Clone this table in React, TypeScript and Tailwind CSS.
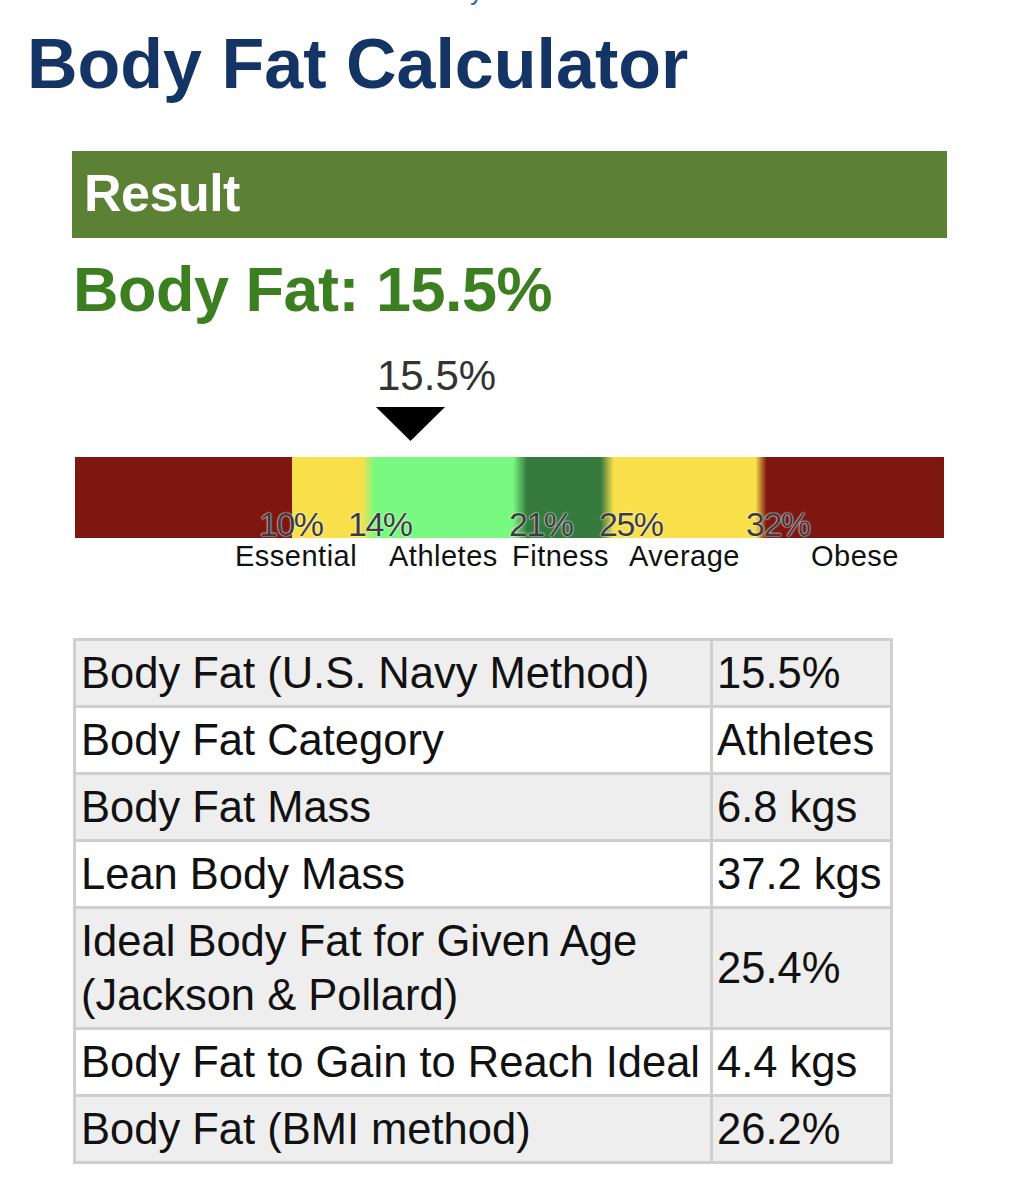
const rows = [
  { label: 'Body Fat (U.S. Navy Method)', value: '15.5%' },
  { label: 'Body Fat Category', value: 'Athletes' },
  { label: 'Body Fat Mass', value: '6.8 kgs' },
  { label: 'Lean Body Mass', value: '37.2 kgs' },
  { label: 'Ideal Body Fat for Given Age|(Jackson & Pollard)', value: '25.4%' },
  { label: 'Body Fat to Gain to Reach Ideal', value: '4.4 kgs' },
  { label: 'Body Fat (BMI method)', value: '26.2%' },
];

const marks = [
  { text: '10%', left: 'left-[184px]' },
  { text: '14%', left: 'left-[273px]' },
  { text: '21%', left: 'left-[434px]' },
  { text: '25%', left: 'left-[524px]' },
  { text: '32%', left: 'left-[671px]' },
];

const categories = [
  { text: 'Essential', left: 'left-[160px]' },
  { text: 'Athletes', left: 'left-[314px]' },
  { text: 'Fitness', left: 'left-[437px]' },
  { text: 'Average', left: 'left-[554px]' },
  { text: 'Obese', left: 'left-[736px]' },
];

function Gauge() {
  return (
    <div className="ml-[75px] mt-[34px] w-[869px]">
      <div className="pl-[302px] text-[42px] leading-[41px] text-[#333]">15.5%</div>
      <svg className="ml-[301px] mt-[11px] block" width="69" height="34" viewBox="0 0 69 34">
        <polygon points="0,0 69,0 34.5,34" fill="#000" />
      </svg>
      <div className="relative mt-[16px] h-[81px] bg-[linear-gradient(to_right,#7d1710_0%,#7d1710_25%,#f9e04b_25%,#f9e04b_33%,#78f97f_34.5%,#78f97f_50.4%,#357a3c_52%,#357a3c_60.5%,#f9e04b_62%,#f9e04b_78.3%,#7d1710_79.6%,#7d1710_100%)]">
        {marks.map((m) => (
          <span
            key={m.text}
            className={`absolute top-[50px] ${m.left} text-[34px] leading-[34px] tracking-[-1.5px] text-[#3c3c3c] [text-shadow:0_0_2px_#fff,0_0_1px_#fff]`}
          >
            {m.text}
          </span>
        ))}
      </div>
      <div className="relative h-[33px]">
        {categories.map((c) => (
          <span key={c.text} className={`absolute top-[4px] ${c.left} text-[29px] leading-[29px] tracking-[0.5px] text-[#111]`}>
            {c.text}
          </span>
        ))}
      </div>
    </div>
  );
}

export default function App() {
  return (
    <div className="min-h-[1200px] w-[1019px] bg-white font-['Liberation_Sans',Arial,sans-serif]">
      <div className="h-[7px] overflow-hidden">
        <div className="-mt-[22px] pl-[470px] text-[26px] leading-[26px] text-[#2e6bb5]">y</div>
      </div>

      <h1 className="ml-[27px] mt-[22px] text-[70px] font-bold leading-[71px] text-[#133465]">
        Body Fat Calculator
      </h1>

      <div className="ml-[72px] mt-[51px] flex h-[87px] w-[875px] items-center bg-[#5c8134] pb-[4px] pl-[12px]">
        <span className="text-[52px] font-bold leading-[52px] tracking-[-0.5px] text-white">Result</span>
      </div>

      <div className="ml-[73px] mt-[20px] text-[63px] font-bold leading-[63px] tracking-[-0.5px] text-[#3b7f20]">
        Body Fat: 15.5%
      </div>

      <Gauge />

      <table className="ml-[73px] mt-[67px] w-[820px] table-fixed border-collapse text-[43.5px] leading-[54px] text-[#111]">
        <tbody>
          {rows.map((r, i) => (
            <tr key={r.label} className={i % 2 === 0 ? 'bg-[#eeeeee]' : 'bg-white'}>
              <td className="w-[637px] border-[3px] border-[#cfcfcf] px-[5px] py-[5px] align-middle">
                {r.label.split('|').map((part, j) => (
                  <div key={j}>{part}</div>
                ))}
              </td>
              <td className="whitespace-nowrap border-[3px] border-[#cfcfcf] px-[4px] py-[5px] align-middle">{r.value}</td>
            </tr>
          ))}
        </tbody>
      </table>
    </div>
  );
}
